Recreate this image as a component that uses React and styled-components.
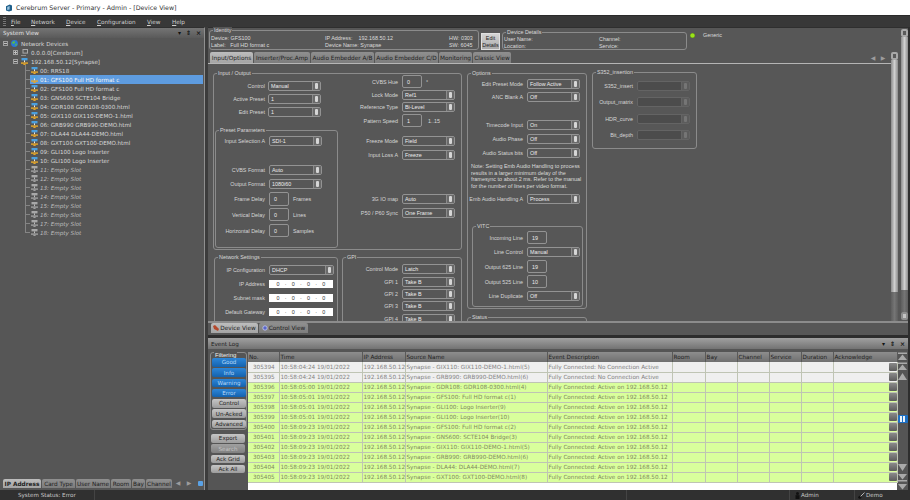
import React from "react";
import styled, { createGlobalStyle } from "styled-components";

const GlobalStyle = createGlobalStyle`
  html, body { margin: 0; padding: 0; background: #3a3a3a; }
  * { box-sizing: border-box; }
`;

const SANS = `"Liberation Sans", Arial, sans-serif`;
const WIDE = `"DejaVu Sans", Verdana, sans-serif`;

const Page = styled.div`
  width: 910px;
  height: 500px;
  overflow: hidden;
  display: flex;
  flex-direction: column;
  background: #3c3c3c;
  font-family: ${SANS};
  color: #dcdcdc;
`;

const TitleBar = styled.div`
  height: 15px;
  background: #fff;
  display: flex;
  align-items: center;
  gap: 3px;
  padding-left: 5px;
  font: 6.3px ${WIDE};
  color: #333;
`;

const MenuBar = styled.div`
  height: 12px;
  display: flex;
  align-items: center;
  background: #383838;
  border-top: 1px solid #2a2a2a;
  padding-left: 3px;
  font: 5.7px ${WIDE};
  color: #cfcfcf;
`;

const Grip = styled.div`
  width: 3px;
  height: 9px;
  margin-right: 5px;
  background: repeating-linear-gradient(#777 0 1px, #333 1px 2px);
`;

const MenuItem = styled.span`
  width: ${({ $w }) => $w}px;
`;

const Body = styled.div`
  flex: 1;
  display: flex;
  min-height: 0;
  gap: 3px;
`;

const SidePanel = styled.div`
  width: 205px;
  display: flex;
  flex-direction: column;
  background: #565656;
  border-top: 1px solid #2f2f2f;
  border-right: 1px solid #8f8f8f;
`;

const DockHeader = styled.div`
  height: ${({ $h }) => $h}px;
  flex: none;
  display: flex;
  align-items: center;
  justify-content: space-between;
  padding: 0 3px 0 3px;
  background: ${({ $bright }) =>
    $bright ? "linear-gradient(#a0a0a0, #737373)" : "linear-gradient(#747474, #5a5a5a)"};
  color: ${({ $bright }) => ($bright ? "#1f1f1f" : "#e2e2e2")};
  font: 5.6px ${WIDE};
`;

const DockButtons = styled.div`
  display: flex;
  gap: 5px;
  color: #111;
  font: bold 6px ${WIDE};
  line-height: 6px;
`;

const Tree = styled.div`
  flex: 1;
  padding-top: 1px;
  font: 5.6px ${WIDE};
`;

const TreeRow = styled.div`
  position: relative;
  height: 9px;
  display: flex;
  align-items: center;
  gap: 3px;
  padding-left: ${({ $indent }) => $indent}px;
  padding-right: 1px;
  color: ${({ $empty }) => ($empty ? "#bdbdbd" : "#d6d6d6")};
  font-style: ${({ $empty }) => ($empty ? "italic" : "normal")};
  white-space: nowrap;

  &::before {
    content: ${({ $slot }) => ($slot ? '""' : "none")};
    position: absolute;
    left: 25px;
    top: -1px;
    width: 1px;
    height: ${({ $last }) => ($last ? "6px" : "10px")};
    background: #858585;
  }

  &::after {
    content: ${({ $slot }) => ($slot ? '""' : "none")};
    position: absolute;
    left: 25px;
    top: 4px;
    width: 5px;
    height: 1px;
    background: #858585;
  }
`;

const SlotBody = styled.div`
  flex: 1;
  height: 9px;
  display: flex;
  align-items: center;
  gap: 2px;
  padding-left: 1px;
  background: ${({ $selected }) => ($selected ? "#5e9ce0" : "transparent")};
  color: ${({ $selected }) => ($selected ? "#f4f4f4" : "inherit")};
`;

const Expander = styled.span`
  width: 5px;
  height: 5px;
  flex: none;
  border: 1px solid #a0a0a0;
  background: ${({ $closed }) =>
    $closed
      ? "linear-gradient(#c0c0c0, #c0c0c0) center / 3px 1px no-repeat, linear-gradient(#c0c0c0, #c0c0c0) center / 1px 3px no-repeat"
      : "linear-gradient(#c0c0c0, #c0c0c0) center / 3px 1px no-repeat"};
`;

const TabStrip = styled.div`
  height: 9px;
  flex: none;
  display: flex;
  gap: 1px;
  margin-bottom: 2px;
  padding-left: 3px;
  font: 5.8px ${WIDE};
`;

const Tab = styled.div`
  width: ${({ $w }) => $w}px;
  display: flex;
  align-items: center;
  justify-content: center;
  gap: 1px;
  white-space: nowrap;
  color: #1e1e1e;
  font-weight: ${({ $bold }) => ($bold ? "bold" : "normal")};
  background: ${({ $active }) =>
    $active ? "linear-gradient(#bdbdbd, #a4a4a4)" : "linear-gradient(#8f8f8f, #7d7d7d)"};
  border-radius: 2px 2px 0 0;
`;

const TabArrow = styled.span`
  width: 10px;
  text-align: center;
  color: #9c9c9c;
  font-size: 6px;
`;

const BlueDot = styled.span`
  width: 5px;
  height: 5px;
  margin: 2px 0 0 3px;
  background: #5aa2e6;
  border-radius: 1px;
`;

const RightColumn = styled.div`
  flex: 1;
  min-width: 0;
  display: flex;
  flex-direction: column;
  border-right: 2px solid #2e2e2e;
`;

const DevicePanel = styled.div`
  height: 308px;
  flex: none;
  display: flex;
  flex-direction: column;
  background: #575757;
  border-top: 1px solid #2f2f2f;
`;

const DeviceTop = styled.div`
  flex: 1;
  min-height: 0;
  display: flex;
`;

const DeviceMain = styled.div`
  flex: 1;
  min-width: 0;
  display: flex;
  flex-direction: column;
`;

const InfoRow = styled.div`
  height: 24px;
  flex: none;
  display: flex;
  align-items: flex-start;
  padding-left: 1px;
  font: 5.4px ${SANS};
`;

const Group = styled.div`
  position: relative;
  flex: none;
  width: ${({ $w }) => $w}px;
  height: ${({ $h }) => $h}px;
  margin-top: ${({ $mt }) => $mt || 0}px;
  margin-left: ${({ $ml }) => $ml || 0}px;
  border: 1px solid #8b8b8b;
  border-radius: 3px;
`;

const Legend = styled.span`
  position: absolute;
  top: -4px;
  left: ${({ $left }) => $left || 3}px;
  padding: 0 1px;
  background: #575757;
  color: #d8d8d8;
  font: 5.4px/6px ${SANS};
  white-space: nowrap;
`;

const InfoGrid = styled.div`
  display: grid;
  grid-template-columns: ${({ $cols }) => $cols};
  grid-auto-rows: 7px;
  align-items: center;
  padding: ${({ $pt }) => $pt}px 0 0 1px;
  white-space: pre;
`;

const EditButton = styled.div`
  width: 19px;
  height: 17px;
  margin: 5px 2px 0 2px;
  display: flex;
  align-items: center;
  justify-content: center;
  text-align: center;
  line-height: 7px;
  background: linear-gradient(#d4d4d4, #aaaaaa);
  border: 1px solid #e0e0e0;
  color: #222;
`;

const Led = styled.span`
  width: 5px;
  height: 5px;
  margin: 5px 0 0 3px;
  border-radius: 50%;
  background: radial-gradient(circle, #9be21a 40%, #3e6c0a 100%);
`;

const Generic = styled.span`
  margin: 4px 0 0 8px;
`;

const PageRow = styled.div`
  flex: 1;
  min-height: 0;
  display: flex;
`;

const PageBody = styled.div`
  flex: 1;
  min-width: 0;
  display: flex;
  flex-direction: column;
`;

const TabBar = styled.div`
  height: 12px;
  flex: none;
  display: flex;
  align-items: stretch;
  gap: 1px;
  padding-left: 2px;
  border-bottom: 1px solid #b5b5b5;
  font: 5.8px ${WIDE};
`;

const PagerArrows = styled.div`
  margin-left: auto;
  display: flex;
  align-items: center;
  margin-right: 3px;
`;

const FormCanvas = styled.div`
  flex: 1;
  min-height: 0;
  overflow: hidden;
  display: flex;
  gap: 5px;
  padding: 9px 0 0 5px;
  font: 5.4px ${SANS};
`;

const Column = styled.div`
  display: flex;
  flex-direction: column;
  flex: none;
  width: ${({ $w }) => $w}px;
  margin-top: ${({ $mt }) => $mt || 0}px;
`;

const Split = styled.div`
  display: flex;
  gap: ${({ $gap }) => $gap || 0}px;
`;

const Field = styled.div`
  display: flex;
  align-items: center;
  gap: ${({ $gap }) => $gap ?? 4}px;
  height: ${({ $h }) => $h || 10}px;
  margin-top: ${({ $mt }) => $mt || 0}px;
`;

const Caption = styled.span`
  flex: none;
  width: ${({ $w }) => $w}px;
  text-align: right;
  white-space: nowrap;
  color: #d6d6d6;
`;

const SelectBox = styled.div`
  display: flex;
  align-items: stretch;
  width: ${({ $w }) => $w || 53}px;
  height: 100%;
  flex: none;
  border: 1px solid ${({ $off }) => ($off ? "#646464" : "#939393")};
  border-radius: 2px;
  background: ${({ $off }) => ($off ? "#4c4c4c" : "#575757")};
  color: #ececec;
`;

const SelectValue = styled.span`
  flex: 1;
  padding-left: 2px;
  line-height: 8px;
  border-right: 1px solid ${({ $off }) => ($off ? "#646464" : "#8a8a8a")};
`;

const SelectKnob = styled.span`
  width: 7px;
  display: flex;
  align-items: center;
  justify-content: center;
  background: ${({ $off }) => ($off ? "#5c5c5c" : "#6a6a6a")};

  &::after {
    content: "";
    width: 3px;
    height: 6px;
    border-radius: 1px;
    background: ${({ $off }) => ($off ? "#757575" : "#d6d6d6")};
  }
`;

const SpinBox = styled.div`
  width: 20px;
  height: 100%;
  flex: none;
  display: flex;
  align-items: center;
  padding-left: 4px;
  border: 1px solid #939393;
  border-radius: 2px;
  color: #ececec;
`;

const Unit = styled.span`
  margin-left: ${({ $ml }) => $ml || 0}px;
  color: #dadada;
  white-space: nowrap;
`;

const IpBox = styled.div`
  width: 64px;
  height: 100%;
  flex: none;
  display: flex;
  align-items: center;
  justify-content: space-around;
  padding: 0 5px;
  background: #fff;
  color: #333;
`;

const Note = styled.div`
  height: 26px;
  margin: 5px 0 0 3px;
  font-size: 5.45px;
  line-height: 6.5px;
  white-space: nowrap;
  color: #dadada;
`;

const InnerScroll = styled.div`
  width: 9px;
  flex: none;
  display: flex;
  flex-direction: column;
  padding-right: 2px;
`;

const OuterScroll = styled.div`
  width: 8px;
  flex: none;
  display: flex;
  flex-direction: column;
  padding: 1px 0 1px 1px;
`;

const ScrollCap = styled.div`
  height: 8px;
  flex: none;
  border: 2px solid ${({ $fill }) => ($fill ? "#8f8f8f" : "#a8a8a8")};
  border-radius: 2px;
  background: ${({ $fill }) => ($fill ? "#c4c4c4" : "#5a5a5a")};
`;

const ScrollThumb = styled.div`
  flex: 1;
  background: linear-gradient(90deg, #8c8c8c, #d0d0d0 50%, #8c8c8c);
`;

const ScrollTrack = styled.div`
  height: ${({ $h }) => $h}px;
  flex: none;
  background: linear-gradient(90deg, #5e5e5e, #757575 50%, #5e5e5e);
`;

const ViewStrip = styled.div`
  height: 14px;
  flex: none;
  display: flex;
  gap: 1px;
  padding: 0 0 2px 3px;
  border-top: 2px solid #8c8c8c;
  font: 5.8px ${WIDE};
`;

const EventPanel = styled.div`
  flex: 1;
  min-height: 0;
  display: flex;
  flex-direction: column;
  background: #555;
  border-top: 3px solid #2d2d2d;
`;

const EventBody = styled.div`
  flex: 1;
  min-height: 0;
  overflow: hidden;
  display: flex;
  padding-top: 3px;
`;

const FilterColumn = styled.div`
  width: 40px;
  flex: none;
  display: flex;
  flex-direction: column;
  padding-left: 2px;
`;

const FilterGroup = styled.div`
  position: relative;
  width: 37px;
  height: 78px;
  padding: 5px 0 0 1px;
  display: flex;
  flex-direction: column;
  gap: 1.8px;
  border: 1px solid #8b8b8b;
  border-radius: 3px;
`;

const FilterLegend = styled(Legend)`
  top: -1px;
  background: #555;
  color: #ededed;
  font-size: 6px;
`;

const ActionStack = styled.div`
  display: flex;
  flex-direction: column;
  gap: 1.8px;
  margin: 4px 0 0 1px;
`;

const Pill = styled.div`
  width: 34px;
  height: 8.5px;
  flex: none;
  display: flex;
  align-items: center;
  justify-content: center;
  border-radius: 2px;
  font: 5.6px ${WIDE};
  color: ${({ $kind }) => ($kind === "on" ? "#b8d8f8" : $kind === "off" ? "#c4c4c4" : "#222")};
  background: ${({ $kind }) =>
    $kind === "on"
      ? "linear-gradient(#2d86d8, #1462ae)"
      : $kind === "off"
        ? "linear-gradient(#a0a0a0, #808080)"
        : "linear-gradient(#c6c6c6, #9c9c9c)"};
`;

const TableArea = styled.div`
  flex: 1;
  min-width: 0;
  background: #fff;
`;

const LogTable = styled.table`
  width: 649px;
  border-collapse: collapse;
  table-layout: fixed;
  font: 5.7px ${WIDE};
`;

const HeadCell = styled.th`
  width: ${({ $w }) => $w}px;
  height: 10px;
  padding: 0 0 0 1px;
  text-align: left;
  font-weight: normal;
  color: #1f1f1f;
  background: linear-gradient(#8d8d8d, #6f6f6f);
  border-right: 1px solid #5a5a5a;
  white-space: nowrap;
  overflow: hidden;
`;

const LogRow = styled.tr`
  height: 10.04px;
  background: ${({ $ok }) => ($ok ? "#d9ff9c" : "#efefef")};
  color: ${({ $ok }) => ($ok ? "#7f8a5e" : "#828282")};
`;

const LogCell = styled.td`
  padding: 0 0 0 ${({ $pad }) => $pad || 1}px;
  border-right: 1px solid #bfc4b4;
  border-bottom: 1px solid #bfc4b4;
  white-space: nowrap;
  overflow: hidden;
`;

const AckCell = styled(LogCell)`
  text-align: right;
  padding: 0;
`;

const AckKnob = styled.span`
  display: inline-block;
  width: 8px;
  height: 8px;
  vertical-align: middle;
  border-radius: 1px;
  background: linear-gradient(#8a8a8a, #5c5c5c);
`;

const LogScroll = styled.div`
  width: 11px;
  flex: none;
  display: flex;
  flex-direction: column;
  align-items: center;
  margin-bottom: -3px;
`;

const PauseButton = styled.div`
  width: 10px;
  height: 8px;
  margin: 33px 0 auto;
  display: flex;
  align-items: center;
  justify-content: center;
  gap: 1px;
  border-radius: 1px;
  background: #1b6fc4;

  &::before, &::after {
    content: "";
    width: 2px;
    height: 6px;
    background: #e8f2fc;
  }
`;

const StatusBar = styled.div`
  height: 10px;
  flex: none;
  display: flex;
  align-items: center;
  background: #303030;
  font: 5.6px ${WIDE};
  color: #c8c8c8;
`;

const StatusCell = styled.div`
  width: ${({ $w }) => $w}px;
  height: 100%;
  flex: none;
  display: flex;
  align-items: center;
  gap: 1px;
  padding-left: ${({ $pad }) => $pad || 0}px;
  border-right: 1px solid ${({ $plain }) => ($plain ? "transparent" : "#444")};
`;

const NodeIcon = ({ empty }) => (
  <svg width="7" height="7" viewBox="0 0 7 7" style={{ flex: "none" }}>
    <rect x="0.5" y="0" width="6" height="2.4" fill={empty ? "#a8a8a8" : "#4aa0e0"} />
    <rect x="3" y="2.4" width="1" height="2" fill={empty ? "#bcbcbc" : "#e8e8e8"} />
    <rect x="0" y="4.4" width="7" height="1.4" fill={empty ? "#a0a0a0" : "#e8a828"} />
    <rect x="2.4" y="5.8" width="2.2" height="1.2" fill={empty ? "#a0a0a0" : "#e8a828"} />
  </svg>
);

const GlobeIcon = () => (
  <svg width="7" height="7" viewBox="0 0 7 7" style={{ flex: "none" }}>
    <circle cx="3.5" cy="3.5" r="3.4" fill="#2b78d6" />
    <path d="M1 2.4 3 1l1.3 1-1 1.6-1.6.2zM4.3 4l1.8-.4-.6 2-1.1.3z" fill="#5cc23c" />
  </svg>
);

const PcIcon = () => (
  <svg width="7" height="7" viewBox="0 0 7 7" style={{ flex: "none" }}>
    <rect x="2" y="0.5" width="4.5" height="3.6" fill="none" stroke="#a8a8a8" />
    <path d="M0 6.5h5" stroke="#8f8f8f" />
  </svg>
);

const AppIcon = () => (
  <svg width="8" height="8" viewBox="0 0 8 8">
    <path d="M1 2.2 4.8.6 7 1.6v5L4 7.6 1 6.4z" fill="#1f5f8a" />
    <path d="M2.2 3 4.6 2v3.6l-2.4.4z" fill="#9cc4de" />
  </svg>
);

const ArrowIcon = ({ dir = "up", line }) => (
  <svg width="11" height="9" viewBox="0 0 11 9" style={{ flex: "none", marginBottom: 1 }}>
    <path d={dir === "up" ? `M1 8h9L5.5 ${line ? 2.5 : 1}z` : `M1 1h9L5.5 ${line ? 6.5 : 8}z`} fill="#a9a9a9" />
    {line && <rect x="1" y={dir === "up" ? 0.5 : 7} width="9" height="1.5" fill="#a9a9a9" />}
  </svg>
);

const Select = ({ value, w, off }) => (
  <SelectBox $w={w} $off={off}>
    <SelectValue $off={off}>{value}</SelectValue>
    <SelectKnob $off={off} />
  </SelectBox>
);

const Ip = () => (
  <IpBox>
    <span>0</span>·<span>0</span>·<span>0</span>·<span>0</span>
  </IpBox>
);

const slots = [
  "00: RRS18",
  "01: GFS100 Full HD format c",
  "02: GFS100 Full HD format c",
  "03: GNS600 SCTE104 Bridge",
  "04: GDR108 GDR108-0300.html",
  "05: GIX110 GIX110-DEMO-1.html",
  "06: GRB990 GRB990-DEMO.html",
  "07: DLA44 DLA44-DEMO.html",
  "08: GXT100 GXT100-DEMO.html",
  "09: GLI100 Logo Inserter",
  "10: GLI100 Logo Inserter",
  "11: Empty Slot",
  "12: Empty Slot",
  "13: Empty Slot",
  "14: Empty Slot",
  "15: Empty Slot",
  "16: Empty Slot",
  "17: Empty Slot",
  "18: Empty Slot",
];

const columns = [
  ["No.", 31],
  ["Time", 83],
  ["IP Address", 43],
  ["Source Name", 142],
  ["Event Description", 125],
  ["Room", 33],
  ["Bay", 32],
  ["Channel", 32],
  ["Service", 32],
  ["Duration", 32],
  ["Acknowledge", 64],
];

const NO_CONN = "Fully Connected: No Connection Active";
const ACTIVE = "Fully Connected: Active on 192.168.50.12";

const events = [
  ["305394", "10:58:04:24 19/01/2022", "Synapse - GIX110: GIX110-DEMO-1.html(5)", NO_CONN],
  ["305395", "10:58:04:24 19/01/2022", "Synapse - GRB990: GRB990-DEMO.html(6)", NO_CONN],
  ["305396", "10:58:05:00 19/01/2022", "Synapse - GDR108: GDR108-0300.html(4)", ACTIVE],
  ["305397", "10:58:05:01 19/01/2022", "Synapse - GFS100: Full HD format c(1)", ACTIVE],
  ["305398", "10:58:05:01 19/01/2022", "Synapse - GLI100: Logo Inserter(9)", ACTIVE],
  ["305399", "10:58:05:01 19/01/2022", "Synapse - GLI100: Logo Inserter(10)", ACTIVE],
  ["305400", "10:58:09:23 19/01/2022", "Synapse - GFS100: Full HD format c(2)", ACTIVE],
  ["305401", "10:58:09:23 19/01/2022", "Synapse - GNS600: SCTE104 Bridge(3)", ACTIVE],
  ["305402", "10:58:09:23 19/01/2022", "Synapse - GIX110: GIX110-DEMO-1.html(5)", ACTIVE],
  ["305403", "10:58:09:23 19/01/2022", "Synapse - GRB990: GRB990-DEMO.html(6)", ACTIVE],
  ["305404", "10:58:09:23 19/01/2022", "Synapse - DLA44: DLA44-DEMO.html(7)", ACTIVE],
  ["305405", "10:58:09:23 19/01/2022", "Synapse - GXT100: GXT100-DEMO.html(8)", ACTIVE],
];

function SystemView() {
  return (
    <SidePanel>
      <DockHeader $h={10}>
        <span>System View</span>
        <DockButtons>
          <span>▾</span>
          <span>⇕</span>
          <span>×</span>
        </DockButtons>
      </DockHeader>
      <Tree>
        <TreeRow $indent={3}>
          <Expander />
          <GlobeIcon />
          <span>Network Devices</span>
        </TreeRow>
        <TreeRow $indent={13}>
          <Expander $closed />
          <PcIcon />
          <span>0.0.0.0[Cerebrum]</span>
        </TreeRow>
        <TreeRow $indent={13}>
          <Expander />
          <NodeIcon />
          <span>192.168.50.12[Synapse]</span>
        </TreeRow>
        {slots.map((slot, i) => (
          <TreeRow key={slot} $indent={30} $slot $last={i === slots.length - 1} $empty={i > 10}>
            <SlotBody $selected={i === 1}>
              <NodeIcon empty={i > 10} />
              <span>{slot}</span>
            </SlotBody>
          </TreeRow>
        ))}
      </Tree>
      <TabStrip>
        <Tab $w={38} $active $bold>IP Address</Tab>
        <Tab $w={33}>Card Type</Tab>
        <Tab $w={34}>User Name</Tab>
        <Tab $w={20}>Room</Tab>
        <Tab $w={13}>Bay</Tab>
        <Tab $w={26}>Channel</Tab>
        <TabArrow>◀</TabArrow>
        <TabArrow>▶</TabArrow>
        <BlueDot />
      </TabStrip>
    </SidePanel>
  );
}

function InputOutput() {
  return (
    <Group $w={249} $h={177}>
      <Legend>Input / Output</Legend>
      <Split>
        <Column $w={126}>
          <Field $gap={3} $mt={7}><Caption $w={51}>Control</Caption><Select value="Manual" /></Field>
          <Field $gap={3} $mt={3}><Caption $w={51}>Active Preset</Caption><Select value="1" /></Field>
          <Field $gap={3} $mt={3}><Caption $w={51}>Edit Preset</Caption><Select value="1" /></Field>
          <Group $w={123} $h={118} $mt={13} $ml={1}>
            <Legend>Preset Parameters</Legend>
            <Field $mt={5}><Caption $w={49}>Input Selection A</Caption><Select value="SDI-1" /></Field>
            <Field $mt={19}><Caption $w={49}>CVBS Format</Caption><Select value="Auto" /></Field>
            <Field $mt={4}><Caption $w={49}>Output Format</Caption><Select value="1080i60" /></Field>
            <Field $mt={3} $h={14}><Caption $w={49}>Frame Delay</Caption><SpinBox>0</SpinBox><Unit>Frames</Unit></Field>
            <Field $mt={2} $h={13}><Caption $w={49}>Vertical Delay</Caption><SpinBox>0</SpinBox><Unit>Lines</Unit></Field>
            <Field $mt={3} $h={13}><Caption $w={49}>Horizontal Delay</Caption><SpinBox>0</SpinBox><Unit>Samples</Unit></Field>
          </Group>
        </Column>
        <Column $w={120}>
          <Field $mt={1} $h={13}><Caption $w={58}>CVBS Hue</Caption><SpinBox>0</SpinBox><Unit>°</Unit></Field>
          <Field $mt={2}><Caption $w={58}>Lock Mode</Caption><Select value="Ref1" /></Field>
          <Field $mt={2}><Caption $w={58}>Reference Type</Caption><Select value="Bi-Level" /></Field>
          <Field $mt={2} $h={13}><Caption $w={58}>Pattern Speed</Caption><SpinBox>1</SpinBox><Unit $ml={2}>1..15</Unit></Field>
          <Field $mt={9}><Caption $w={58}>Freeze Mode</Caption><Select value="Field" /></Field>
          <Field $mt={4}><Caption $w={58}>Input Loss A</Caption><Select value="Freeze" /></Field>
          <Field $mt={34}><Caption $w={58}>3G IO map</Caption><Select value="Auto" /></Field>
          <Field $mt={4}><Caption $w={58}>P50 / P60 Sync</Caption><Select value="One Frame" /></Field>
        </Column>
      </Split>
    </Group>
  );
}

function Network() {
  return (
    <Split $gap={4}>
      <Group $w={124} $h={90} $mt={7} $ml={1}>
        <Legend>Network Settings</Legend>
        <Field $mt={7}><Caption $w={50}>IP Configuration</Caption><Select value="DHCP" w={65} /></Field>
        <Field $mt={5} $h={8}><Caption $w={50}>IP Address</Caption><Ip /></Field>
        <Field $mt={6} $h={8}><Caption $w={50}>Subnet mask</Caption><Ip /></Field>
        <Field $mt={6} $h={8}><Caption $w={50}>Default Gateway</Caption><Ip /></Field>
      </Group>
      <Group $w={120} $h={90} $mt={7}>
        <Legend>GPI</Legend>
        <Field $mt={6}><Caption $w={55}>Control Mode</Caption><Select value="Latch" /></Field>
        <Field $mt={3}><Caption $w={55}>GPI 1</Caption><Select value="Take B" /></Field>
        <Field $mt={2}><Caption $w={55}>GPI 2</Caption><Select value="Take B" /></Field>
        <Field $mt={2}><Caption $w={55}>GPI 3</Caption><Select value="Take B" /></Field>
        <Field $mt={3}><Caption $w={55}>GPI 4</Caption><Select value="Take B" /></Field>
      </Group>
    </Split>
  );
}

function Options() {
  return (
    <Column $w={120}>
      <Group $w={120} $h={236}>
        <Legend>Options</Legend>
        <Field $mt={5}><Caption $w={55}>Edit Preset Mode</Caption><Select value="Follow Active" /></Field>
        <Field $mt={3}><Caption $w={55}>ANC Blank A</Caption><Select value="Off" /></Field>
        <Field $mt={18}><Caption $w={55}>Timecode Input</Caption><Select value="On" /></Field>
        <Field $mt={4}><Caption $w={55}>Audio Phase</Caption><Select value="Off" /></Field>
        <Field $mt={4}><Caption $w={55}>Audio Status bits</Caption><Select value="Off" /></Field>
        <Note>
          Note: Setting Emb Audio Handling to process
          <br />
          results in a larger minimum delay of the
          <br />
          framesync to about 2 ms. Refer to the manual
          <br />
          for the number of lines per video format.
        </Note>
        <Field $mt={5}><Caption $w={55}>Emb Audio Handling A</Caption><Select value="Process" /></Field>
        <Group $w={111} $h={81} $mt={22} $ml={4}>
          <Legend>VITC</Legend>
          <Field $mt={4} $h={13}><Caption $w={50}>Incoming Line</Caption><SpinBox>19</SpinBox></Field>
          <Field $mt={3}><Caption $w={50}>Line Control</Caption><Select value="Manual" /></Field>
          <Field $mt={3} $h={13}><Caption $w={50}>Output 625 Line</Caption><SpinBox>19</SpinBox></Field>
          <Field $mt={2} $h={13}><Caption $w={50}>Output 525 Line</Caption><SpinBox>10</SpinBox></Field>
          <Field $mt={3}><Caption $w={50}>Line Duplicate</Caption><Select value="Off" /></Field>
        </Group>
      </Group>
      <Group $w={120} $h={40} $mt={8}>
        <Legend>Status</Legend>
      </Group>
    </Column>
  );
}

function Insertion() {
  return (
    <Column $w={105} $mt={-1}>
      <Group $w={105} $h={77}>
        <Legend>S352_insertion</Legend>
        <Field $mt={8}><Caption $w={40}>S352_insert</Caption><Select value="" off /></Field>
        <Field $mt={6}><Caption $w={40}>Output_matrix</Caption><Select value="" off /></Field>
        <Field $mt={7}><Caption $w={40}>HDR_curve</Caption><Select value="" off /></Field>
        <Field $mt={6}><Caption $w={40}>Bit_depth</Caption><Select value="" off /></Field>
      </Group>
    </Column>
  );
}

function DeviceView() {
  return (
    <DevicePanel>
      <DeviceTop>
        <DeviceMain>
          <InfoRow>
            <Group $w={270} $h={20} $mt={2}>
              <Legend>Identity</Legend>
              <InfoGrid $cols="114px 124px 1fr" $pt={3.5}>
                <span>Device: GFS100</span>
                <span>IP Address:    192.168.50.12</span>
                <span>HW: 0303</span>
                <span>Label:   Full HD format c</span>
                <span>Device Name: Synapse</span>
                <span>SW: 6045</span>
              </InfoGrid>
            </Group>
            <EditButton>Edit Details</EditButton>
            <Group $w={185} $h={18} $mt={4}>
              <Legend>Device Details</Legend>
              <InfoGrid $cols="95px 1fr" $pt={2.5}>
                <span>User Name:</span>
                <span>Channel:</span>
                <span>Location:</span>
                <span>Service:</span>
              </InfoGrid>
            </Group>
            <Led />
            <Generic>Generic</Generic>
          </InfoRow>
          <PageRow>
            <PageBody>
              <TabBar>
                <Tab $w={43} $active>Input/Options</Tab>
                <Tab $w={56}>Inserter/Proc.Amp</Tab>
                <Tab $w={63}>Audio Embedder A/B</Tab>
                <Tab $w={63}>Audio Embedder C/D</Tab>
                <Tab $w={33}>Monitoring</Tab>
                <Tab $w={38}>Classic View</Tab>
                <PagerArrows>
                  <TabArrow>◀</TabArrow>
                  <TabArrow>▶</TabArrow>
                </PagerArrows>
              </TabBar>
              <FormCanvas>
                <Column $w={249}>
                  <InputOutput />
                  <Network />
                </Column>
                <Options />
                <Insertion />
              </FormCanvas>
            </PageBody>
            <InnerScroll>
              <ScrollCap />
              <ScrollThumb />
              <ScrollTrack $h={29} />
            </InnerScroll>
          </PageRow>
        </DeviceMain>
        <OuterScroll>
          <ScrollCap />
          <ScrollThumb />
          <ScrollTrack $h={22} />
          <ScrollCap $fill />
        </OuterScroll>
      </DeviceTop>
      <ViewStrip>
        <Tab $w={47} $active>
          <svg width="6" height="6" viewBox="0 0 6 6"><path d="M0 1l2-1 4 4-1 2-4-2z" fill="#b4482c" /></svg>
          Device View
        </Tab>
        <Tab $w={49}>
          <svg width="6" height="6" viewBox="0 0 6 6"><circle cx="3" cy="3" r="2.2" fill="#5a66c8" stroke="#c8ccf0" strokeWidth="0.8" /></svg>
          Control View
        </Tab>
      </ViewStrip>
    </DevicePanel>
  );
}

function EventLog() {
  const filters = ["Good", "Info", "Warning", "Error"];
  const toggles = ["Control", "Un-Acked", "Advanced"];
  return (
    <EventPanel>
      <DockHeader $h={11} $bright>
        <span>Event Log</span>
        <DockButtons>
          <span>▾</span>
          <span>⇕</span>
          <span>×</span>
        </DockButtons>
      </DockHeader>
      <EventBody>
        <FilterColumn>
          <FilterGroup>
            <FilterLegend>Filtering</FilterLegend>
            {filters.map((f) => <Pill key={f} $kind="on">{f}</Pill>)}
            {toggles.map((f) => <Pill key={f}>{f}</Pill>)}
          </FilterGroup>
          <ActionStack>
            <Pill>Export</Pill>
            <Pill $kind="off">Search</Pill>
            <Pill>Ack Grid</Pill>
            <Pill>Ack All</Pill>
          </ActionStack>
        </FilterColumn>
        <TableArea>
          <LogTable>
            <thead>
              <tr>
                {columns.map(([name, w]) => <HeadCell key={name} $w={w}>{name}</HeadCell>)}
              </tr>
            </thead>
            <tbody>
              {events.map(([no, time, source, text], i) => (
                <LogRow key={no} $ok={i > 1}>
                  <LogCell $pad={5}>{no}</LogCell>
                  <LogCell>{time}</LogCell>
                  <LogCell>192.168.50.12</LogCell>
                  <LogCell>{source}</LogCell>
                  <LogCell>{text}</LogCell>
                  <LogCell />
                  <LogCell />
                  <LogCell />
                  <LogCell />
                  <LogCell />
                  <AckCell><AckKnob /></AckCell>
                </LogRow>
              ))}
            </tbody>
          </LogTable>
        </TableArea>
        <LogScroll>
          <ArrowIcon dir="up" line />
          <ArrowIcon dir="up" line />
          <ArrowIcon dir="up" />
          <PauseButton />
          <ArrowIcon dir="down" />
          <ArrowIcon dir="down" line />
          <ArrowIcon dir="down" line />
        </LogScroll>
      </EventBody>
    </EventPanel>
  );
}

export default function App() {
  return (
    <Page>
      <GlobalStyle />
      <TitleBar>
        <AppIcon />
        Cerebrum Server - Primary - Admin - [Device View]
      </TitleBar>
      <MenuBar>
        <Grip />
        <MenuItem $w={20}><u>F</u>ile</MenuItem>
        <MenuItem $w={35}><u>N</u>etwork</MenuItem>
        <MenuItem $w={31}><u>D</u>evice</MenuItem>
        <MenuItem $w={50}><u>C</u>onfiguration</MenuItem>
        <MenuItem $w={25}><u>V</u>iew</MenuItem>
        <MenuItem $w={20}><u>H</u>elp</MenuItem>
      </MenuBar>
      <Body>
        <SystemView />
        <RightColumn>
          <DeviceView />
          <EventLog />
        </RightColumn>
      </Body>
      <StatusBar>
        <StatusCell $w={95} $pad={18}>System Status: Error</StatusCell>
        <StatusCell $w={532} />
        <StatusCell $w={163} />
        <StatusCell $w={65} $pad={5}>
          <svg width="5" height="7" viewBox="0 0 5 7"><circle cx="2.5" cy="1.6" r="1.5" fill="#111" /><rect x="0.5" y="3.2" width="4" height="3.8" fill="#111" /></svg>
          Admin
        </StatusCell>
        <StatusCell $w={55} $pad={3} $plain>
          <svg width="7" height="7" viewBox="0 0 7 7"><circle cx="1.8" cy="5.2" r="1.5" fill="#111" /><path d="M2.6 4.4 6.5.6" stroke="#ddd" strokeWidth="0.8" /></svg>
          Demo
        </StatusCell>
      </StatusBar>
    </Page>
  );
}
